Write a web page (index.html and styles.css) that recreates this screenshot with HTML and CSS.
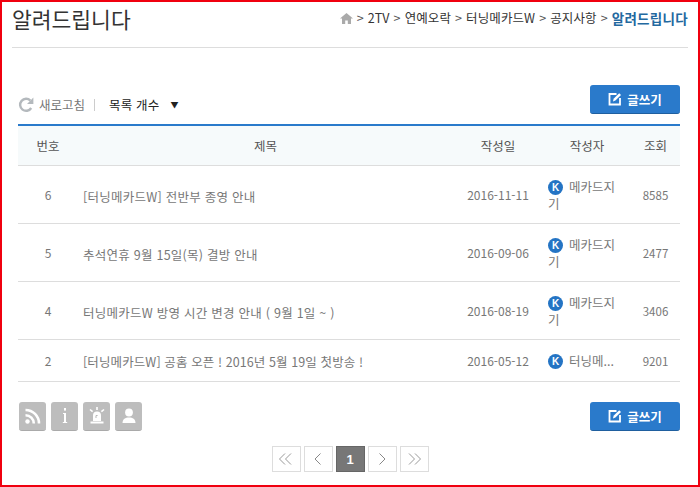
FILE: index.html
```html
<!DOCTYPE html>
<html lang="ko">
<head>
    <meta charset="UTF-8">
    <title>알려드립니다</title>
    <link rel="stylesheet" href="styles.css">
</head>
<body>
    <div class="frame">
        <div class="page-head">
            <h1>알려드립니다</h1>
            <div class="crumbs">
                <svg class="home" width="13" height="11" viewBox="0 0 13 11"><path d="M6.500 0 0 5.600h2V11h3.200V7.400h2.600V11H11V5.600h2z"/></svg>
                <i>&gt;</i><span>2TV</span><i>&gt;</i><span>연예오락</span><i>&gt;</i><span>터닝메카드W</span><i>&gt;</i><span>공지사항</span><i>&gt;</i><b>알려드립니다</b>
            </div>
        </div>

        <div class="toolbar">
            <div class="tools-left">
                <svg class="refresh" width="16" height="16" viewBox="0 0 16 16"><path d="M13.200 11A6 6 0 1 1 12.400 3.600" fill="none" stroke="#b4b9bd" stroke-width="2.400"/><path d="M15.400 0.600V7H9z" fill="#b4b9bd"/></svg>
                <span class="refresh-label">새로고침</span>
                <span class="sep"></span>
                <span class="count-select">목록 개수</span>
                <span class="caret">▼</span>
            </div>
            <a class="write-btn">
                <svg width="14" height="14" viewBox="0 0 14 14"><path d="M8.500 2H1.500v10.500H12V6" fill="none" stroke="#fff" stroke-width="1.800"/><path d="M5 9.400 5.600 6.800 11.200 1.200 13 3 7.400 8.600z" fill="#fff"/></svg>
                글쓰기
            </a>
        </div>

        <table class="board">
            <colgroup>
                <col class="c-num"><col class="c-title"><col class="c-date"><col class="c-author"><col class="c-hit">
            </colgroup>
            <thead>
                <tr><th>번호</th><th>제목</th><th>작성일</th><th>작성자</th><th>조회</th></tr>
            </thead>
            <tbody>
                <tr>
                    <td class="num">6</td>
                    <td class="title">[터닝메카드W] 전반부 종영 안내</td>
                    <td class="num">2016-11-11</td>
                    <td class="author"><span class="k">K</span>메카드지기</td>
                    <td class="hit">8585</td>
                </tr>
                <tr>
                    <td class="num">5</td>
                    <td class="title">추석연휴 9월 15일(목) 결방 안내</td>
                    <td class="num">2016-09-06</td>
                    <td class="author"><span class="k">K</span>메카드지기</td>
                    <td class="hit">2477</td>
                </tr>
                <tr>
                    <td class="num">4</td>
                    <td class="title">터닝메카드W 방영 시간 변경 안내 ( 9월 1일 ~ )</td>
                    <td class="num">2016-08-19</td>
                    <td class="author"><span class="k">K</span>메카드지기</td>
                    <td class="hit">3406</td>
                </tr>
                <tr class="short">
                    <td class="num">2</td>
                    <td class="title">[터닝메카드W] 공홈 오픈 ! 2016년 5월 19일 첫방송 !</td>
                    <td class="num">2016-05-12</td>
                    <td class="author"><span class="k">K</span>터닝메...</td>
                    <td class="hit">9201</td>
                </tr>
            </tbody>
        </table>

        <div class="bottom-bar">
            <div class="feed-btns">
                <a class="feed"><svg width="18" height="18" viewBox="0 0 18 18"><circle cx="3.500" cy="14.500" r="2.200" fill="#fff"/><path d="M1.500 8.200a8.300 8.300 0 0 1 8.300 8.300M1.500 3a13.500 13.500 0 0 1 13.500 13.500" fill="none" stroke="#fff" stroke-width="2.600"/></svg></a>
                <a class="feed"><svg width="18" height="18" viewBox="0 0 18 18"><rect x="8" y="1" width="2" height="2.600" fill="#fff"/><path d="M8 6h2v9.600H8z" fill="#fff"/><path d="M7 6.500h1.500M6.800 15.500h4.400" stroke="#fff"/></svg></a>
                <a class="feed"><svg width="20" height="20" viewBox="0 0 20 20"><path d="M6 15V9.500a4 4 0 0 1 8 0V15z" fill="#fff"/><path d="M3.500 15.500h13v2h-13z" fill="#fff"/><path d="M10 1v3M3 3.500l2.600 2.200M17 3.500l-2.600 2.200" stroke="#fff" stroke-width="1.600"/><path d="M9 12V9.500h1.600" fill="none" stroke="#b9b9b9"/></svg></a>
                <a class="feed"><svg width="18" height="18" viewBox="0 0 18 18"><circle cx="9" cy="5.500" r="3.900" fill="#fff"/><path d="M2.500 16c0-4 2.800-5.600 6.500-5.600s6.500 1.600 6.500 5.600z" fill="#fff"/></svg></a>
            </div>
            <a class="write-btn">
                <svg width="14" height="14" viewBox="0 0 14 14"><path d="M8.500 2H1.500v10.500H12V6" fill="none" stroke="#fff" stroke-width="1.800"/><path d="M5 9.400 5.600 6.800 11.200 1.200 13 3 7.400 8.600z" fill="#fff"/></svg>
                글쓰기
            </a>
        </div>

        <div class="pager">
            <a><svg width="16" height="12" viewBox="0 0 16 12"><path d="M7 .5 1.500 6 7 11.500M13 .5 7.500 6l5.500 5.500" fill="none" stroke="#999"/></svg></a>
            <a><svg width="8" height="12" viewBox="0 0 8 12"><path d="M6.500.5 1 6l5.500 5.500" fill="none" stroke="#888"/></svg></a>
            <a class="on">1</a>
            <a><svg width="8" height="12" viewBox="0 0 8 12"><path d="M1.500.5 7 6l-5.500 5.500" fill="none" stroke="#888"/></svg></a>
            <a><svg width="16" height="12" viewBox="0 0 16 12"><path d="M3 .5 8.500 6 3 11.500M9 .5 14.500 6 9 11.500" fill="none" stroke="#999"/></svg></a>
        </div>
    </div>
</body>
</html>
```

FILE: styles.css
```css
html, body {
    margin: 0;
    padding: 0;
    background: #fff;
}

body {
    font-family: 'Noto Sans CJK KR', 'Liberation Sans', sans-serif;
    font-size: 12.5px;
    color: #666;
}

.frame {
    box-sizing: border-box;
    width: 700px;
    height: 487px;
    border: 2px solid #f0000f;
    padding: 0 10px;
    overflow: hidden;
}

.page-head {
    display: flex;
    justify-content: space-between;
    align-items: flex-start;
    height: 45px;
    border-bottom: 1px solid #ddd;
}

.page-head h1 {
    margin: 2px 0 0;
    font-size: 21.5px;
    line-height: 30px;
    font-weight: 400;
    color: #333;
}

.crumbs {
    display: flex;
    align-items: center;
    gap: 2px;
    height: 14px;
    margin-top: 9px;
    color: #333;
    line-height: 14px;
    letter-spacing: 0.1px;
}

.crumbs i {
    font-style: normal;
    color: #555;
    margin: 0 2px;
}

.crumbs b {
    color: #23699f;
    font-size: 13.5px;
    font-weight: 700;
    letter-spacing: 0.3px;
}

.crumbs .home {
    fill: #aaa;
}

.toolbar {
    display: flex;
    justify-content: space-between;
    align-items: flex-end;
    height: 30px;
    margin: 36px 8px 0 6px;
}

.tools-left {
    display: flex;
    align-items: center;
    height: 17px;
    margin-bottom: 1px;
}

.refresh-label {
    margin-left: 5px;
    color: #777;
}

.sep {
    width: 1px;
    height: 12px;
    background: #ccc;
    margin: 0 14px 0 9px;
}

.count-select {
    color: #222;
    letter-spacing: 0.2px;
}

.caret {
    margin-left: 11px;
    font-size: 8px;
    color: #222;
}

.write-btn {
    display: flex;
    align-items: center;
    justify-content: center;
    gap: 5px;
    width: 90px;
    height: 29px;
    box-sizing: border-box;
    background: #2a7acb;
    border-bottom: 1px solid #1f5f9f;
    border-radius: 3px;
    color: #fff;
    font-weight: 700;
}

.board {
    width: 662px;
    margin: 10px 0 0 6px;
    border-collapse: collapse;
    table-layout: fixed;
    border-top: 2px solid #2a7acb;
}

.c-num { width: 60px; }
.c-title { width: 375px; }
.c-date { width: 90px; }
.c-author { width: 88px; }
.c-hit { width: 49px; }

.board th {
    height: 39px;
    padding: 0;
    background: #f6fafb;
    border-bottom: 1px solid #ddd;
    font-weight: 400;
    color: #555;
}

.board td {
    height: 57px;
    padding: 0;
    text-align: center;
    border-bottom: 1px solid #ddd;
    color: #777;
}

.board .short td {
    height: 41px;
}

.board td.num {
    font-size: 12px;
}

.board td.hit {
    font-size: 11.5px;
}

.board td.title {
    height: 54px;
    text-align: left;
    padding: 3px 0 0 5px;
    letter-spacing: 0.25px;
}

.board .short td.title {
    height: 40px;
    padding-top: 1px;
    letter-spacing: 0.1px;
}

.board td.author {
    text-align: left;
    padding: 0 8px 0 5px;
    line-height: 17px;
}

.short .author {
    white-space: nowrap;
    overflow: hidden;
}

.k {
    display: inline-block;
    width: 15px;
    height: 15px;
    margin-right: 6px;
    border-radius: 50%;
    background: #2474c4;
    color: #fff;
    font: 700 10px/15px 'Liberation Sans', sans-serif;
    text-align: center;
    vertical-align: 1px;
}

.bottom-bar {
    display: flex;
    justify-content: space-between;
    align-items: flex-start;
    margin: 20px 8px 0 7px;
}

.feed-btns {
    display: flex;
    gap: 5px;
}

.feed {
    display: flex;
    align-items: center;
    justify-content: center;
    width: 27px;
    height: 29px;
    box-sizing: border-box;
    background: #bdbdbd;
    border-bottom: 1px solid #aaa;
    border-radius: 3px;
}

.pager {
    display: flex;
    justify-content: center;
    gap: 3px;
    margin-top: 15px;
}

.pager a {
    display: flex;
    align-items: center;
    justify-content: center;
    width: 27px;
    height: 24px;
    border: 1px solid #ddd;
    background: #fff;
}

.pager a.on {
    background: #777;
    border-color: #666;
    color: #fff;
    font: 700 13px 'Liberation Sans', sans-serif;
}
```
